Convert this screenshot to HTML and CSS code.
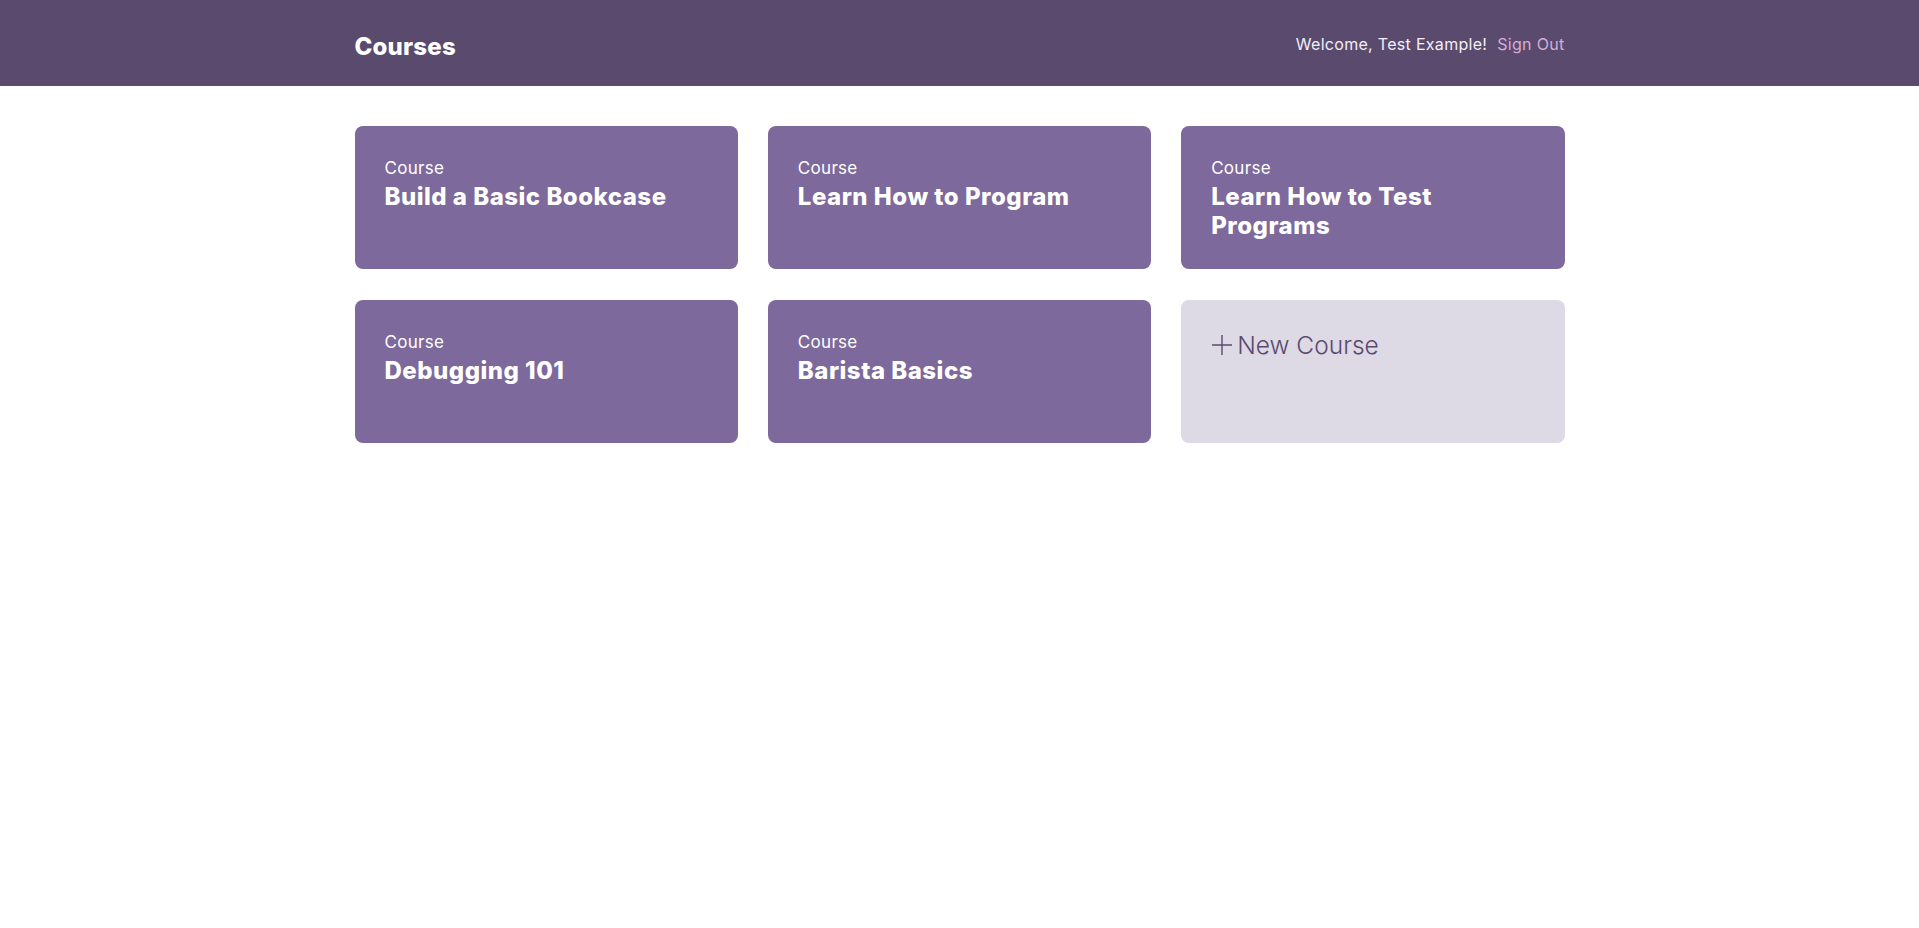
FILE: index.html
```html
<!DOCTYPE html>
<html lang="en">
<head>
<meta charset="utf-8">
<title>Courses</title>
<link rel="stylesheet" href="styles.css">
</head>
<body>
<header class="header">
  <div class="bounds header-inner">
    <h1 class="header-title">Courses</h1>
    <nav class="header-nav">
      <span class="welcome">Welcome, Test Example!</span>
      <a class="signout" href="#">Sign Out</a>
    </nav>
  </div>
</header>
<main class="bounds">
  <div class="grid">
    <a class="card" href="#"><span class="card-label">Course</span><span class="card-title">Build a Basic Bookcase</span></a>
    <a class="card" href="#"><span class="card-label">Course</span><span class="card-title">Learn How to Program</span></a>
    <a class="card" href="#"><span class="card-label">Course</span><span class="card-title">Learn How to Test Programs</span></a>
    <a class="card" href="#"><span class="card-label">Course</span><span class="card-title">Debugging 101</span></a>
    <a class="card" href="#"><span class="card-label">Course</span><span class="card-title">Barista Basics</span></a>
    <a class="card card-new" href="#"><span class="new-title"><svg class="plus" viewBox="0 0 22 22" width="22" height="22"><path d="M11 1v20M1 11h20" stroke="currentColor" stroke-width="1.4" fill="none"/></svg>New Course</span></a>
  </div>
</main>
</body>
</html>
```
FILE: styles.css
```css
* { box-sizing: border-box; }
body {
  margin: 0;
  font-family: Inter, "Liberation Sans", sans-serif;
  color: #3e3250;
  background: #fff;
}
.bounds {
  width: 1210px;
  margin: 0 auto;
}
.header {
  background: #594a6e;
  height: 86px;
}
.header-inner {
  height: 100%;
  display: flex;
  align-items: center;
  justify-content: space-between;
}
.header-title {
  margin: 7px 0 0;
  font-size: 24px;
  font-weight: 800;
  letter-spacing: 0.2px;
  color: #fff;
}
.header-nav {
  display: flex;
  gap: 10px;
  font-size: 16px;
  letter-spacing: 0.3px;
  margin-top: 2px;
}
.welcome { color: #f4eef8; }
.signout { color: #d6acd8; text-decoration: none; }
.grid {
  display: grid;
  grid-template-columns: repeat(3, 1fr);
  gap: 31px 30px;
  padding-top: 40px;
}
.card {
  display: flex;
  flex-direction: column;
  height: 143px;
  padding: 30px 30px;
  border-radius: 8px;
  background: #7d699b;
  color: #fff;
  text-decoration: none;
}
.card-label {
  font-size: 17px;
  line-height: 1.5;
  letter-spacing: 0.3px;
}
.card-title {
  font-size: 24px;
  font-weight: 800;
  line-height: 29px;
  letter-spacing: 0.5px;
}
.card-new {
  background: #ddd9e5;
  color: #5b4a70;
}
.new-title {
  display: flex;
  align-items: center;
  font-size: 24.5px;
  font-weight: 300;
  letter-spacing: 0;
  padding-top: 0;
}
.plus {
  margin-right: 4px;
}
```
